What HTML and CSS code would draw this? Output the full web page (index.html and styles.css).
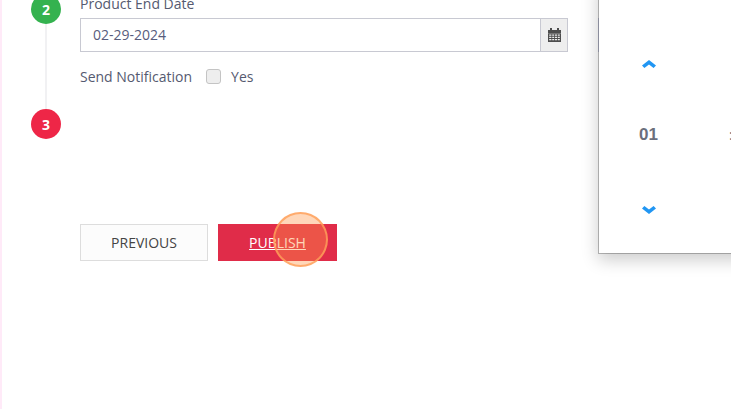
FILE: index.html
```html
<!DOCTYPE html>
<html lang="en">
<head>
    <meta charset="UTF-8">
    <meta name="viewport" content="width=device-width, initial-scale=1.0">
    <title>Publish product</title>
    <link rel="stylesheet" href="styles.css">
</head>
<body>
    <div class="page">
        <div class="steps">
            <div class="step-circle step-green">2</div>
            <div class="step-line"></div>
            <div class="step-circle step-red">3</div>
        </div>

        <div class="form">
            <label class="field-label">Product End Date</label>
            <div class="date-input">
                <div class="date-value">02-29-2024</div>
                <div class="date-addon">
                    <svg width="13" height="14" viewBox="0 0 13 14">
                        <path fill="#4d4d4d" d="M0 2h2V0h2v2h5V0h2v2h2v3.4H0z"/>
                        <path fill="#4d4d4d" fill-rule="evenodd" d="M0 5.4h13V14H0zM1.2 6.6v1.2h2.2V6.6zM4.2 6.6v1.2h2V6.6zM7 6.6v1.2h2V6.6zM9.8 6.6v1.2h2V6.6zM1.2 8.8V10h2.2V8.8zM4.2 8.8V10h2V8.8zM7 8.8V10h2V8.8zM9.8 8.8V10h2V8.8zM1.2 11v1.2h2.2V11zM4.2 11v1.2h2V11zM7 11v1.2h2V11zM9.8 11v1.2h2V11z"/>
                    </svg>
                </div>
            </div>

            <div class="notify-row">
                <span class="notify-label">Send Notification</span>
                <span class="checkbox"></span>
                <span class="notify-yes">Yes</span>
            </div>

            <div class="actions">
                <button class="btn btn-prev">PREVIOUS</button>
                <button class="btn btn-publish">PUBLISH</button>
            </div>
        </div>

        <div class="next-field"></div>
    </div>

    <div class="picker">
        <div class="picker-col">
            <svg class="chevron" width="14" height="8" viewBox="0 0 14 8">
                <path fill="#2196f3" d="M7 0l7 5.4L11.6 8 7 4.4 2.4 8 0 5.4z"/>
            </svg>
            <div class="picker-hour">01</div>
            <svg class="chevron" width="14" height="8" viewBox="0 0 14 8">
                <path fill="#2196f3" d="M7 8L0 2.6 2.4 0 7 3.6 11.6 0 14 2.6z"/>
            </svg>
        </div>
        <div class="picker-sep">:</div>
    </div>

    <div class="click-ring"></div>
</body>
</html>
```

FILE: styles.css
```css
html, body {
    height: 100%;
}
body {
    margin: 0;
    overflow: hidden;
    font-family: 'Open Sans', sans-serif;
    color: #555a70;
    background-color: #fff;
    border-left: 2px solid #ffeaf8;
    box-sizing: border-box;
}
.page {
    display: flex;
    margin-top: -6px;
    padding-left: 29px;
}
.steps {
    display: flex;
    flex-direction: column;
    align-items: center;
    width: 30px;
}
.step-circle {
    display: flex;
    align-items: center;
    justify-content: center;
    flex: none;
    width: 30px;
    height: 30px;
    border-radius: 50%;
    color: #fff;
    font-size: 14px;
    font-weight: 700;
}
.step-green {
    background-color: #34b24f;
}
.step-red {
    background-color: #ee2647;
}
.step-line {
    width: 2px;
    height: 85px;
    background-color: #f1f1f3;
}
.form {
    width: 488px;
    margin-left: 19px;
}
.field-label {
    display: block;
    height: 24px;
    font-size: 14px;
    line-height: 19px;
}
.date-input {
    display: flex;
    height: 34px;
    border: 1px solid #c8c9d2;
    box-sizing: border-box;
}
.date-value {
    flex: 1;
    padding-left: 12px;
    font-size: 14px;
    line-height: 32px;
    color: #585c7c;
}
.date-addon {
    display: flex;
    align-items: center;
    justify-content: center;
    width: 26px;
    background-color: #eee;
    border-left: 1px solid #c8c9d2;
}
.notify-row {
    display: flex;
    align-items: center;
    height: 20px;
    margin-top: 14px;
    font-size: 14px;
}
.checkbox {
    width: 13px;
    height: 13px;
    margin-left: 14px;
    background-color: #eee;
    border: 1px solid #c4c4c4;
    border-radius: 3px;
}
.notify-yes {
    margin-left: 10px;
}
.actions {
    display: flex;
    gap: 10px;
    margin-top: 138px;
}
.btn {
    height: 37px;
    padding: 0;
    font-family: inherit;
    font-size: 14px;
    cursor: pointer;
}
.btn-prev {
    width: 128px;
    color: #444;
    background-color: #fcfcfc;
    border: 1px solid #ddd;
}
.btn-publish {
    width: 119px;
    color: #fff;
    background-color: #e02c49;
    border: none;
    text-decoration: underline;
}
.next-field {
    width: 1px;
    height: 34px;
    margin-top: 24px;
    margin-left: 30px;
    background-color: #d0d2e8;
}
.picker {
    position: absolute;
    top: -20px;
    left: 598px;
    display: flex;
    width: 200px;
    height: 274px;
    background-color: #fff;
    background-clip: padding-box;
    border: 1px solid rgba(0, 0, 0, 0.25);
    box-sizing: border-box;
    box-shadow: 0 6px 16px rgba(0, 0, 0, 0.2);
}
.picker-col {
    display: flex;
    flex-direction: column;
    align-items: center;
    width: 99px;
    padding-top: 79px;
}
.chevron {
    display: block;
}
.picker-hour {
    margin-top: 58px;
    margin-bottom: 62px;
    font-family: 'Liberation Sans', Arial, sans-serif;
    font-size: 17px;
    font-weight: 700;
    line-height: 18px;
    color: #6b6f7c;
}
.picker-sep {
    margin-top: 145px;
    margin-left: 31px;
    font-size: 14px;
    line-height: 18px;
    color: #6b6f7c;
}
.click-ring {
    position: absolute;
    top: 212px;
    left: 273px;
    width: 51px;
    height: 51px;
    background-color: rgba(255, 150, 70, 0.38);
    border: 2px solid rgba(255, 160, 90, 0.8);
    border-radius: 50%;
}
```
